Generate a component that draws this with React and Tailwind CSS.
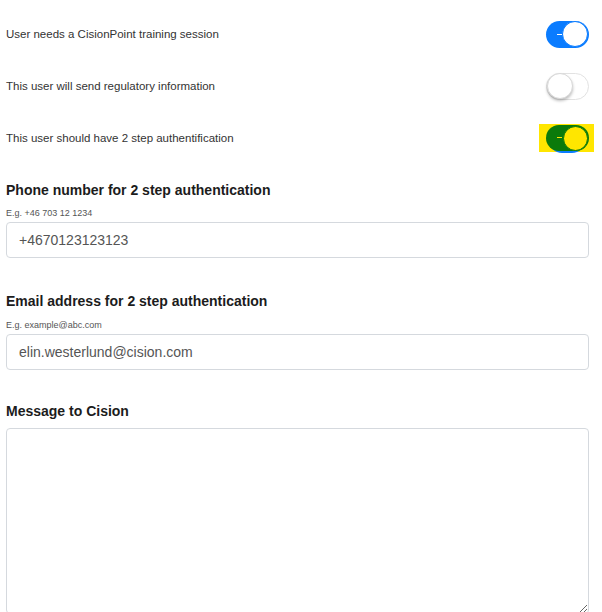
import React, { useState } from 'react';

const font = { fontFamily: '"Liberation Sans", Arial, sans-serif' };

const Toggle = ({ on, highlight, onClick }) => {
  if (highlight) {
    return (
      <button onClick={onClick} className="relative mr-[-5px] flex h-[28px] w-[55px] items-center justify-start bg-[#ffe600] pl-[7px]">
        <span className="absolute left-[10px] top-[3px] h-[26px] w-[36px] rounded-full bg-[#0a7cff]" />
        <span className="relative flex h-[26px] w-[43px] items-center justify-end rounded-full bg-[#0b7a0b] pr-[1px]">
          <span className="absolute left-[11px] top-[12px] h-[1px] w-[5px] bg-[#ffe600]" />
          <span className="h-[25px] w-[25px] rounded-full border border-[#0b7a0b] bg-[#ffe600]" />
        </span>
      </button>
    );
  }
  return (
    <button
      onClick={onClick}
      className={`relative flex h-[27px] w-[43px] items-center rounded-full ${
        on ? 'justify-end bg-[#0a7cff] pr-[1px]' : 'justify-start border border-[#e2e2e2] bg-white'
      }`}
    >
      {on && <span className="absolute left-[11px] top-[13px] h-[1px] w-[5px] bg-white" />}
      <span
        className={`rounded-full bg-white ${
          on ? 'h-[26px] w-[26px] border border-[#0a7cff]' : 'h-[26px] w-[26px] border border-[#d8d8d8] shadow-[0_2px_3px_rgba(0,0,0,0.25)]'
        }`}
      />
    </button>
  );
};

export default function App() {
  const [training, setTraining] = useState(true);
  const [regulatory, setRegulatory] = useState(false);
  const [twoStep, setTwoStep] = useState(true);

  const rows = [
    { label: 'User needs a CisionPoint training session', on: training, set: setTraining },
    { label: 'This user will send regulatory information', on: regulatory, set: setRegulatory },
    { label: 'This user should have 2 step authentification', on: twoStep, set: setTwoStep, highlight: true },
  ];

  return (
    <div className="h-[612px] w-[602px] overflow-hidden bg-white" style={font}>
      <div className="w-[589px] pl-[6px] pt-[8px]">
        {rows.map((r) => (
          <div key={r.label} className="flex h-[52px] items-center justify-between">
            <span className="pt-[2px] text-[11.5px] text-[#333]">{r.label}</span>
            <Toggle on={r.on} highlight={r.highlight} onClick={() => r.set(!r.on)} />
          </div>
        ))}

        <div className="mt-[16px]">
          <h3 className="text-[14px] font-bold leading-[20px] text-[#1c1c1c]">Phone number for 2 step authentication</h3>
          <p className="mt-[7px] text-[9px] leading-[12px] text-[#555]">E.g. +46 703 12 1234</p>
          <input
            defaultValue="+4670123123123"
            className="mt-[3px] h-[36px] w-full rounded-[4px] border border-[#d5d9de] px-[12px] text-[14px] text-[#555] outline-none"
          />
        </div>

        <div className="mt-[33px]">
          <h3 className="text-[14px] font-bold leading-[20px] text-[#1c1c1c]">Email address for 2 step authentication</h3>
          <p className="mt-[8px] text-[9px] leading-[12px] text-[#555]">E.g. example@abc.com</p>
          <input
            defaultValue="elin.westerlund@cision.com"
            className="mt-[3px] h-[36px] w-full rounded-[4px] border border-[#d5d9de] px-[12px] text-[14px] text-[#555] outline-none"
          />
        </div>

        <div className="mt-[31px]">
          <h3 className="text-[14px] font-bold leading-[20px] text-[#1c1c1c]">Message to Cision</h3>
          <textarea className="mt-[7px] block h-[186px] w-full rounded-[4px] border border-[#d5d9de] px-[12px] py-[8px] text-[14px] text-[#555] outline-none" />
        </div>
      </div>
    </div>
  );
}
